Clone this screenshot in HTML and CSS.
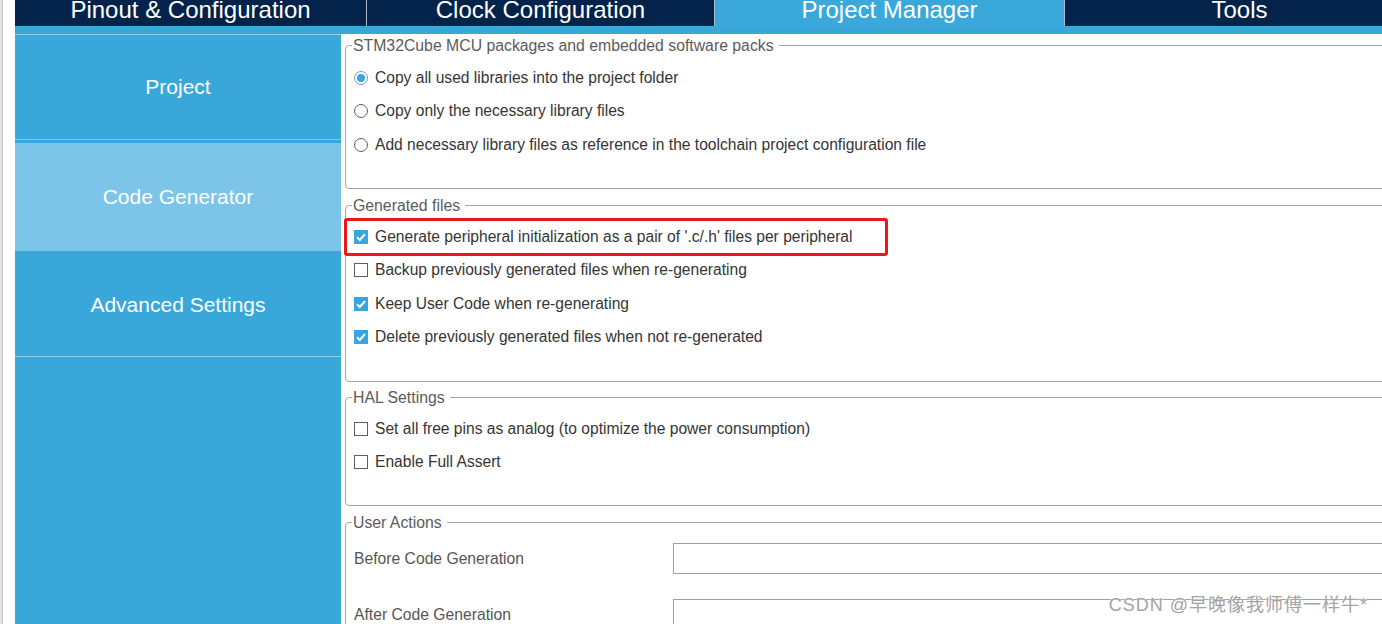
FILE: index.html
```html
<!DOCTYPE html>
<html lang="en">
<head>
<meta charset="utf-8">
<title>Project Manager - Code Generator</title>
<link rel="stylesheet" href="styles.css">
</head>
<body>
<div class="screen">
  <div class="edge"></div>
  <div class="app">
    <div class="tabs">
      <div class="tab t1">Pinout &amp; Configuration</div>
      <div class="tab t2">Clock Configuration</div>
      <div class="tab t3 active">Project Manager</div>
      <div class="tab t4">Tools</div>
    </div>
    <div class="main">
      <nav class="side">
        <div class="side-item first">Project</div>
        <div class="side-item selected">Code Generator</div>
        <div class="side-item last">Advanced Settings</div>
      </nav>
      <div class="content">
        <section class="group g1">
          <div class="legend">STM32Cube MCU packages and embedded software packs</div>
          <div class="items">
            <div class="row"><span class="radio on"></span><span>Copy all used libraries into the project folder</span></div>
            <div class="row"><span class="radio"></span><span>Copy only the necessary library files</span></div>
            <div class="row"><span class="radio"></span><span>Add necessary library files as reference in the toolchain project configuration file</span></div>
          </div>
        </section>

        <section class="group g2">
          <div class="legend">Generated files</div>
          <div class="items">
            <div class="row"><span class="check on"><svg viewBox="0 0 14 14" width="14" height="14"><path d="M3 7.2 L5.8 10 L11 4.2" fill="none" stroke="#fff" stroke-width="2"/></svg></span><span>Generate peripheral initialization as a pair of '.c/.h' files per peripheral</span></div>
            <div class="row"><span class="check"></span><span>Backup previously generated files when re-generating</span></div>
            <div class="row"><span class="check on"><svg viewBox="0 0 14 14" width="14" height="14"><path d="M3 7.2 L5.8 10 L11 4.2" fill="none" stroke="#fff" stroke-width="2"/></svg></span><span>Keep User Code when re-generating</span></div>
            <div class="row"><span class="check on"><svg viewBox="0 0 14 14" width="14" height="14"><path d="M3 7.2 L5.8 10 L11 4.2" fill="none" stroke="#fff" stroke-width="2"/></svg></span><span>Delete previously generated files when not re-generated</span></div>
          </div>
          <div class="highlight"></div>
        </section>

        <section class="group g3">
          <div class="legend">HAL Settings</div>
          <div class="items">
            <div class="row"><span class="check"></span><span>Set all free pins as analog (to optimize the power consumption)</span></div>
            <div class="row"><span class="check"></span><span>Enable Full Assert</span></div>
          </div>
        </section>

        <section class="group g4">
          <div class="legend">User Actions</div>
          <div class="actions">
            <label class="act-label">Before Code Generation</label>
            <div class="act-input"></div>
            <label class="act-label">After Code Generation</label>
            <div class="act-input"></div>
          </div>
        </section>
      </div>
    </div>
  </div>
  <div class="watermark">CSDN @早晚像我师傅一样牛*</div>
</div>
</body>
</html>
```

FILE: styles.css
```css
html, body {
  margin: 0;
  padding: 0;
  height: 624px;
  overflow: hidden;
  background: #fff;
  font-family: "Liberation Sans", Arial, sans-serif;
}

.screen {
  display: flex;
  height: 624px;
  position: relative;
}

.edge {
  width: 15px;
  flex: none;
  background: linear-gradient(to right, #e4e4e4 0 2px, #c2c2c2 2px 3px, #ffffff 3px);
}

.app {
  flex: 1;
  min-width: 0;
  display: flex;
  flex-direction: column;
  overflow: hidden;
}

/* Top tabs */
.tabs {
  display: flex;
  flex: none;
  height: 26px;
  background: #03234b;
}

.tab {
  flex: none;
  box-sizing: border-box;
  color: #fff;
  font-size: 24px;
  line-height: 20px;
  text-align: center;
  white-space: nowrap;
  border-right: 1px solid #a9b6c6;
}

.t1 { width: 352px; }
.t2 { width: 348px; }
.t3 { width: 350px; }
.t4 { width: 349px; border-right: none; }

.tab.active {
  background: #3ba8dc;
}

/* Main area */
.main {
  flex: 1;
  min-height: 0;
  display: flex;
  background: #3aa7db;
  padding-top: 8px;
}

.side {
  width: 326px;
  flex: none;
}

.side-item {
  box-sizing: border-box;
  display: flex;
  align-items: center;
  justify-content: center;
  color: #fff;
  font-size: 21px;
}

.side-item.first {
  height: 106px;
  border-top: 1px solid #8fd0f0;
  border-bottom: 1px solid #82c9ec;
  margin-bottom: 3px;
}

.side-item.selected {
  height: 108px;
  background: #7cc5e8;
}

.side-item.last {
  height: 106px;
  padding-top: 3px;
  border-bottom: 1px solid #8fd0f0;
}

.content {
  flex: 1;
  min-width: 0;
  background: #fff;
  padding: 11px 0 0 4px;
  overflow: hidden;
}

/* Group boxes */
.group {
  box-sizing: border-box;
  border: 1px solid #a3a7ab;
  border-radius: 4px;
  margin-right: -20px;
}

.g1 { height: 144px; }
.g2 { height: 177px; margin-top: 16px; position: relative; }
.g3 { height: 109px; margin-top: 15px; }
.g4 { height: 200px; margin-top: 16px; }

.legend {
  width: fit-content;
  margin: -9px 0 0 6px;
  padding: 0 5px 0 1px;
  background: #fff;
  color: #5b5b5b;
  font-size: 15.8px;
  line-height: 18px;
}

.items {
  padding: 5px 0 0 8px;
}

.g1 .items {
  padding-top: 6px;
}

.row {
  height: 33.5px;
  display: flex;
  align-items: center;
  gap: 7px;
  font-size: 15.6px;
  color: #353535;
  white-space: nowrap;
}

.check {
  box-sizing: border-box;
  width: 14px;
  height: 14px;
  flex: none;
  border: 1px solid #5e5e5e;
  background: #fff;
}

.check.on {
  border: none;
  background: #3aa5dc;
}

.check svg {
  display: block;
}

.radio {
  box-sizing: border-box;
  width: 14px;
  height: 14px;
  flex: none;
  border: 1px solid #5e5e5e;
  border-radius: 50%;
  background: #fff;
  display: flex;
  align-items: center;
  justify-content: center;
}

.radio.on {
  border-color: #6a9fc4;
}

.radio.on::after {
  content: "";
  width: 8px;
  height: 8px;
  border-radius: 50%;
  background: #3aa5dc;
}

/* Annotation rectangle */
.highlight {
  position: absolute;
  left: -2px;
  top: 12px;
  width: 544px;
  height: 38px;
  box-sizing: border-box;
  border: 3px solid #f21515;
  border-radius: 3px;
  pointer-events: none;
}

/* User actions */
.actions {
  display: grid;
  grid-template-columns: 319px 1fr;
  row-gap: 25px;
  align-items: center;
  padding: 11px 0 0 8px;
}

.act-label {
  color: #555;
  font-size: 15.7px;
}

.act-input {
  box-sizing: border-box;
  height: 31px;
  border: 1px solid #a0a0a0;
  background: #fff;
}

.watermark {
  position: absolute;
  right: 14px;
  bottom: 9px;
  font-family: "Liberation Sans", "Noto Sans CJK SC", sans-serif;
  font-size: 18px;
  letter-spacing: 1px;
  line-height: 20px;
  color: #a3a3a3;
  text-shadow: 0 0 2px #fff, 0 0 1px #fff;
  white-space: nowrap;
}
```
